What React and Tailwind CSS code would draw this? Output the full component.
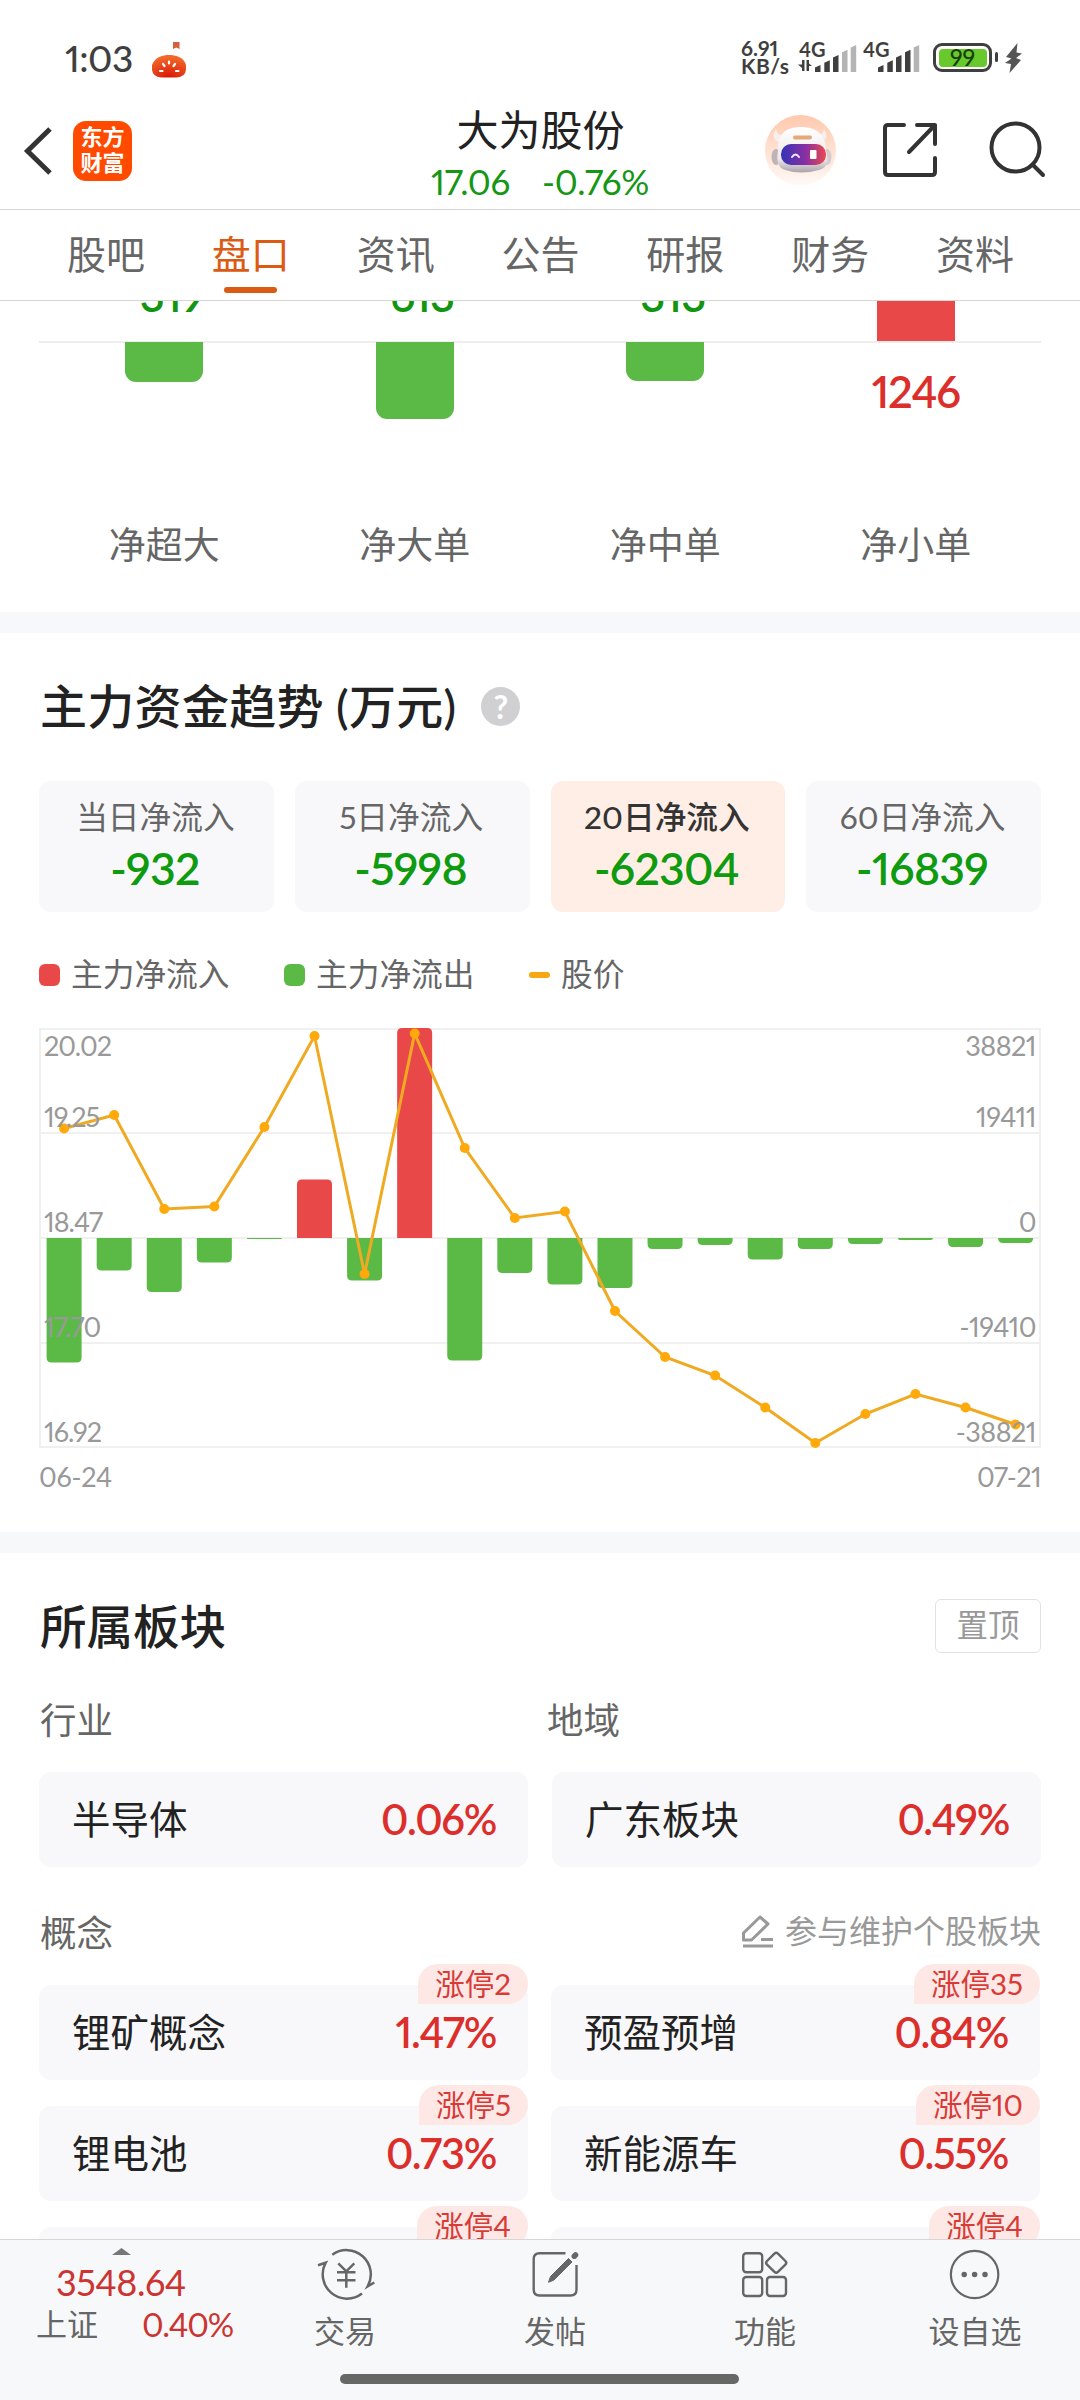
import React, { useState } from "react";

const tabs = ["股吧", "盘口", "资讯", "公告", "研报", "财务", "资料"]

const orders = [
  { name: "净超大", value: -319, height: 40 },
  { name: "净大单", value: -613, height: 77 },
  { name: "净中单", value: -313, height: 39 },
  { name: "净小单", value: 1246, height: 0 },
]

const periods = [
  { name: "当日净流入", value: "-932" },
  { name: "5日净流入", value: "-5998" },
  { name: "20日净流入", value: "-62304" },
  { name: "60日净流入", value: "-16839" },
]

// end of every bar, measured from the top of the chart (zero line is at 210)
const flows = [334.5, 242.5, 264, 234.5, 211, 151.5, 252.5, 0, 332.5, 245, 256.5, 260, 221, 217, 231.5, 221, 216, 212, 219, 215]
const prices = [100.5, 87, 181, 178.5, 99, 8, 246, 5.5, 120, 190, 183.5, 283, 329, 347.5, 379.5, 415, 386, 366, 379.5, 396.5]

const leftLabels = ["20.02", "19.25", "18.47", "17.70", "16.92"]
const rightLabels = ["38821", "19411", "0", "-19410", "-38821"]
const labelY = [27.5, 98.5, 203.5, 308.5, 413.5]

const concepts = [
  { name: "锂矿概念", rate: "1.47%", up: 2 },
  { name: "预盈预增", rate: "0.84%", up: 35 },
  { name: "锂电池", rate: "0.73%", up: 5 },
  { name: "新能源车", rate: "0.55%", up: 10 },
  { name: "", rate: "", up: 4 },
  { name: "", rate: "", up: 4 },
]

const Signal = ({ off, className }) => {
  const bars = [[0, 20], [9.3, 15.3], [18, 10], [27, 4.7], [35.7, 0]]

  return (
    <svg width="42" height="27" viewBox="0 0 42 27" className={className}>
      {
        bars.map(([x, y], i) => (
          <path
            key={x}
            d={`M${x} ${y + 2.5}L${x + 5.5} ${y}V27H${x}Z`}
            fill={i >= 5 - off ? "#b4b4b4" : "#3f3f3f"}
          />
        ))
      }
    </svg>
  )
}

const StatusBar = () => {
  return (
    <div className="h-[105px] flex items-start text-[#3f3f3f]">
      <div className="ml-[65px] mt-[38px] w-[87px] text-[37px] leading-10 font-medium tracking-[-0.5px]">1:03</div>
      <svg width="36" height="38" viewBox="0 0 36 38" className="mt-[40px]">
        <defs>
          <radialGradient id="fan" cx="0.5" cy="1" r="0.9">
            <stop offset="0" stopColor="#d81407" />
            <stop offset="1" stopColor="#f1682a" />
          </radialGradient>
        </defs>
        <path d="M21 2h6.500v7l-3.200-1.500-3.300 1.500z" fill="#d6603c" />
        <path d="M0 25C3 17 11 15 17 15S32 17 34 25V30Q33 37 25 37.500H9Q1 37 0 30Z" fill="url(#fan)" />
        <path d="M17 21.500v2M11 24l1.500 2M23 24l-1.500 2M8 31h2.500M24 31h2.500" stroke="#fff" strokeWidth="2.200" strokeLinecap="round" />
      </svg>
      <div className="ml-[553px] mt-[39px] w-[58px] text-[21px] leading-[18px] font-bold">
        <div>6.91</div>
        <div className="tracking-[0.5px]">KB/s</div>
      </div>
      <div className="relative w-[64px] h-[33px] mt-[40px] flex justify-end">
        <div className="absolute left-0 top-0 text-[20px] leading-[18px] font-bold">4G</div>
        <svg width="14" height="11" viewBox="0 0 14 11" className="absolute left-[-1px] top-[20px]">
          <path d="M4 0h2.500v11H4V8L0 4.500h4zM8.500 0H11v3.500L14 6h-3v5H8.500z" fill="#3f3f3f" />
        </svg>
        <Signal off={2} className="mr-[6px] mt-[4.500px]" />
      </div>
      <div className="relative w-[70px] h-[33px] mt-[40px] flex">
        <div className="absolute left-0 top-0 text-[20px] leading-[18px] font-bold">4G</div>
        <Signal off={1} className="ml-[15px] mt-[4.500px]" />
      </div>
      <div className="w-[59px] h-[29px] mt-[43px] border-[3px] border-[#3f3f3f] rounded-[9px] p-[2.500px]">
        <div className="h-full bg-[#68c92c] rounded-[4px] flex items-center justify-center text-[23px] leading-none font-medium text-[#173f0b]">99</div>
      </div>
      <div className="ml-[3px] mt-[52px] w-[3px] h-[10px] rounded-sm bg-[#3f3f3f]"></div>
      <svg width="18" height="30" viewBox="0 0 18 30" className="ml-[7px] mt-[43px]">
        <path d="M12.500 0L1 14l5.500 1.500L0 20l6 1-1.500 9L16 17l-5-2 6-4.500-5.500-1z" fill="#555" />
      </svg>
    </div>
  )
}

const Header = () => {
  return (
    <header className="h-[105px] border-b border-[#d6d6d6] grid grid-cols-3">
      <div className="flex items-start">
        <svg width="30" height="52" viewBox="0 0 30 52" className="ml-[23px] mt-[20px]" fill="none" stroke="#333" strokeWidth="5">
          <path d="M27 4L4.500 26L27 48" />
        </svg>
        <div className="ml-[20px] mt-[16px] w-[59px] h-[60px] rounded-[13px] bg-[#ff4a00] text-white font-bold text-[22px] leading-[26px] text-center pt-[3px]">
          东方<br />财富
        </div>
      </div>
      <div className="flex flex-col items-center">
        <h1 className="ml-px mt-[2px] h-[46px] leading-[46px] text-[42px] text-[#222]">大为股份</h1>
        <div className="mt-[8px] leading-10 flex gap-[32px] text-[35px] tracking-[-0.300px] text-[#159615]">
          <span>17.06</span>
          <span>-0.76%</span>
        </div>
      </div>
      <div className="flex items-start">
        <svg width="71" height="71" viewBox="0 0 71 71" className="ml-[45px] mt-[10px]">
          <defs>
            <linearGradient id="sky" x1="0" y1="0" x2="0" y2="1">
              <stop offset="0" stopColor="#ffc8ad" />
              <stop offset="1" stopColor="#fffaf7" />
            </linearGradient>
            <linearGradient id="visor">
              <stop offset="0" stopColor="#3433b4" />
              <stop offset="0.55" stopColor="#8a2fa4" />
              <stop offset="1" stopColor="#ea4a4d" />
            </linearGradient>
            <linearGradient id="head" x1="0" y1="0" x2="0" y2="1">
              <stop offset="0" stopColor="#fff" />
              <stop offset="0.7" stopColor="#efe8e8" />
              <stop offset="1" stopColor="#aaa3ac" />
            </linearGradient>
          </defs>
          <circle cx="35.500" cy="35.500" r="35.500" fill="url(#sky)" />
          <path d="M11 14q-5 7 0 12l7 2 2-7q-8 0-9-7zM59 14q5 7 0 12l-7 2-2-7q8 0 9-7z" fill="#f6efec" />
          <ellipse cx="11" cy="42" rx="4.500" ry="8" fill="#beb4b7" />
          <ellipse cx="62" cy="42" rx="4.500" ry="8" fill="#d6cbce" />
          <path d="M13 36C12 20 20 12 36 12S61 20 61 36Q66 52 54 55Q36 60 20 55Q10 52 13 36Z" fill="url(#head)" />
          <rect x="28" y="20.500" width="19" height="4" rx="2" fill="#e5a878" />
          <rect x="16" y="29" width="45" height="21" rx="10" fill="url(#visor)" />
          <path d="M27 42q3.500-5 7 0" fill="none" stroke="#f2eaff" strokeWidth="2" strokeLinecap="round" />
          <rect x="45" y="35" width="6.500" height="9" rx="1" fill="#fff" />
        </svg>
        <svg width="56" height="56" viewBox="0 0 56 56" className="ml-[46px] mt-[17px]" fill="none" stroke="#333" strokeWidth="4" strokeLinecap="round" strokeLinejoin="round">
          <path d="M22 3H6Q3 3 3 6V50Q3 53 6 53H50Q53 53 53 50V36M35 3H53V22M53 3L27 30" />
        </svg>
        <svg width="60" height="60" viewBox="0 0 60 60" className="ml-[49px] mt-[15px]" fill="none" stroke="#333" strokeWidth="4" strokeLinecap="round">
          <circle cx="28.500" cy="27.500" r="24" />
          <path d="M46 45L56 55" />
        </svg>
      </div>
    </header>
  )
}

const Orders = () => {
  return (
    <section className="h-[311px] px-[39px]">
      <div className="h-[42px] border-b-2 border-[#eee] grid grid-cols-4">
        {
          orders.map(el => (
            <div key={el.name} className="h-[40px] overflow-hidden flex flex-col justify-end items-center">
              {
                el.value < 0 ? (
                  <div className="mb-[24px] leading-[44px] shrink-0 text-[43.500px] font-semibold tracking-[-0.800px] text-[#129612]">{el.value}</div>
                ) : (
                  <div className="w-[78px] h-[40px] bg-[#e84848]"></div>
                )
              }
            </div>
          ))
        }
      </div>
      <div className="h-[172px] grid grid-cols-4 justify-items-center">
        {
          orders.map(el => (
            el.value < 0 ? (
              <div key={el.name} className="relative -mt-px w-[78px] rounded-b-[11px] bg-[#5bb946]" style={{ height: el.height }}></div>
            ) : (
              <div key={el.name} className="mt-[26px] leading-[44px] text-[43.500px] font-semibold tracking-[-1.200px] text-[#dc2f2c]">{el.value}</div>
            )
          ))
        }
      </div>
      <div className="grid grid-cols-4 text-center text-[37px] leading-[59px] text-[#666]">
        {
          orders.map(el => <div key={el.name}>{el.name}</div>)
        }
      </div>
    </section>
  )
}

const TrendChart = () => {
  const x = (i) => 64.1 + i * 50.08

  return (
    <svg width="1080" height="470" viewBox="0 0 1080 470" className="block">
      <g stroke="#f0f0f0" strokeWidth="2" fill="none">
        <path d="M40 1H1040V419H40ZM40 105H1040M40 210H1040M40 315H1040" />
      </g>
      {
        flows.map((end, i) => {
          const left = x(i) - 17.5
          const h = Math.abs(end - 210)
          const r = Math.min(5, h)

          return end < 210 ? (
            <path key={i} fill="#e84848" d={`M${left} 210v${r - h}q0 ${-r} ${r} ${-r}h${35 - 2 * r}q${r} 0 ${r} ${r}V210Z`} />
          ) : (
            <path key={i} fill="#5bb946" d={`M${left} 210v${h - r}q0 ${r} ${r} ${r}h${35 - 2 * r}q${r} 0 ${r} ${-r}V210Z`} />
          )
        })
      }
      <polyline points={prices.map((y, i) => `${x(i)},${y}`).join(" ")} fill="none" stroke="#f0aa22" strokeWidth="3" />
      {
        prices.map((y, i) => <circle key={i} cx={x(i)} cy={y} r="5" fill="#ffa90a" />)
      }
      <g fill="#999" fontSize="27">
        {
          leftLabels.map((el, i) => <text key={el} x="44" y={labelY[i]} className="tracking-[-1px]">{el}</text>)
        }
        {
          rightLabels.map((el, i) => <text key={el} x="1036" y={labelY[i]} textAnchor="end" className="tracking-[-0.500px]">{el}</text>)
        }
        <text x="39" y="458.500" className="tracking-[-0.300px]">06-24</text>
        <text x="1041" y="458.500" textAnchor="end" className="tracking-[-0.600px]">07-21</text>
      </g>
    </svg>
  )
}

const Trend = () => {
  const [active] = useState(2)

  return (
    <section className="h-[899px]">
      <div className="h-[148px] px-[40px] flex items-center">
        <h2 className="-mt-[2px] text-[47px] leading-none font-medium tracking-[0.300px] text-[#222]">主力资金趋势 (万元)</h2>
        <span className="ml-[25px] -mt-px w-[39px] h-[39px] rounded-full bg-[#d0d0d2] text-white text-[32px] leading-[39px] font-bold text-center">?</span>
      </div>
      <div className="px-[39px] grid grid-cols-4 gap-[21px]">
        {
          periods.map((el, i) => (
            <div key={el.name} className={`h-[131px] rounded-xl pt-[16px] text-center ${ i === active ? "bg-[#ffeee6]" : "bg-[#f8f8fa]" }`}>
              <div className={`-ml-[2px] text-[31.700px] leading-10 ${ i === active ? "font-medium text-[#333]" : "text-[#666]" }`}>{el.name}</div>
              <div className="mt-[7px] -ml-[3px] text-[44.500px] leading-[48px] font-semibold tracking-[-0.700px] text-[#0f9b0f]">{el.value}</div>
            </div>
          ))
        }
      </div>
      <div className="px-[39px] h-[116px] pt-[9px] flex items-center text-[31.700px] leading-none text-[#666]">
        <span className="w-[21px] h-[22px] rounded-md bg-[#e84848]"></span>
        <span className="ml-[11px] w-[213px]">主力净流入</span>
        <span className="w-[21px] h-[22px] rounded-md bg-[#5bb946]"></span>
        <span className="ml-[11px] w-[213px]">主力净流出</span>
        <span className="w-[21px] h-[6px] rounded-[3px] bg-[#f7a713]"></span>
        <span className="ml-[11px]">股价</span>
      </div>
      <TrendChart />
    </section>
  )
}

const PlateCard = ({ name, rate, up }) => {
  return (
    <div className="relative h-[95px] rounded-xl bg-[#f8f8fa] pl-[33px] pr-[32px] flex items-center justify-between leading-none">
      <span className="-mt-px text-[38.500px] text-[#222]">{name}</span>
      <span className="text-[41.500px] font-semibold text-[#dc2f2c] tracking-[-1.300px]">{rate}</span>
      {
        up && (
          <span className="absolute right-0 -top-[21px] h-[40px] px-[17px] rounded-[20px] rounded-bl-none bg-[#fde8e6] text-[29.500px] leading-[40px] text-[#d93a36]">涨停{up}</span>
        )
      }
    </div>
  )
}

const Plates = () => {
  return (
    <section className="px-[39px]">
      <div className="h-[147px] flex items-center justify-between">
        <h2 className="ml-px text-[46.500px] leading-none font-medium text-[#222]">所属板块</h2>
        <button className="w-[106px] h-[54px] -mt-px border border-[#e2e2e2] rounded-md text-[31.500px] leading-none text-[#999]">置顶</button>
      </div>
      <div className="grid grid-cols-2 gap-x-[24px] text-[36.500px] leading-[41px] text-[#666]">
        <div className="ml-px">行业</div>
        <div className="-ml-[5px]">地域</div>
      </div>
      <div className="mt-[31px] grid grid-cols-2 gap-x-[24px]">
        <PlateCard name="半导体" rate="0.06%" />
        <PlateCard name="广东板块" rate="0.49%" />
      </div>
      <div className="h-[118px] pt-[14px] flex items-center justify-between leading-none">
        <span className="ml-px text-[36.500px] text-[#666]">概念</span>
        <span className="flex items-center gap-[11px] text-[32px] text-[#999] -mt-[5px]">
          <svg width="34" height="34" viewBox="0 0 34 34" fill="none" stroke="#999" strokeWidth="3" strokeLinejoin="round">
            <path d="M3 32H33M21 25.500H33M3.500 19L20 3L28 10L11.500 26H3.500Z" />
          </svg>
          参与维护个股板块
        </span>
      </div>
      <div className="mr-px grid grid-cols-2 gap-x-[23px] gap-y-[26px]">
        {
          concepts.map((el, i) => <PlateCard key={i} {...el} />)
        }
      </div>
    </section>
  )
}

const icons = {
  trade: (
    <g strokeWidth="2.500">
      <path d="M17.300 10.700A24.300 24.300 0 0 1 52.700 42.300L59.300 38.500M47 49.500A24.300 24.300 0 0 1 10.700 18.700L3 21.300" />
      <path d="M23.300 19.300L31.300 27.300L39.300 19.300M22 28.300H40.500M22 36.300H40.500M31.300 27.500V43.700" />
    </g>
  ),
  post: (
    <g>
      <path d="M40.500 9.200H14.500Q8.700 9.200 8.700 15V45.500Q8.700 51.500 14.500 51.500H45.500Q51.500 51.500 51.500 45.500V21" strokeWidth="2.400" />
      <path d="M23.500 38.300L25.500 32.500L43.500 14.500L47 18L29 36Z" fill="#666" strokeWidth="1" />
      <path d="M49.300 12.200L50.500 11" strokeWidth="5.500" strokeLinecap="round" />
    </g>
  ),
  more: (
    <g strokeWidth="2.400">
      <rect x="8.200" y="9.300" width="19" height="19" rx="3" />
      <rect x="8.200" y="33" width="19" height="19" rx="3" />
      <rect x="32" y="33" width="19" height="19" rx="3" />
      <rect x="33.500" y="11" width="15.500" height="15.500" rx="2.500" transform="rotate(45 41.200 18.700)" />
    </g>
  ),
  watch: (
    <g>
      <circle cx="29.600" cy="30.500" r="23.700" strokeWidth="2.200" />
      <path d="M19.200 30.500h.01M29.600 30.500h.01M40 30.500h.01" strokeWidth="5.500" strokeLinecap="round" />
    </g>
  ),
}

const navs = [
  { name: "交易", icon: icons.trade },
  { name: "发帖", icon: icons.post },
  { name: "功能", icon: icons.more },
  { name: "设自选", icon: icons.watch },
]

const Footer = () => {
  return (
    <footer className="h-[161px] border-t border-[#d6d6d6] bg-[#f7f8fa]">
      <div className="h-[134px] flex">
        <div className="w-[240px]">
          <svg width="19" height="7" viewBox="0 0 19 7" className="ml-[112px] mt-[8px]">
            <path d="M0 7L9.500 0L19 7Z" fill="#777" />
          </svg>
          <div className="mt-[7px] ml-[56px] text-[36px] leading-10 tracking-[-0.500px] text-[#cc3431]">3548.64</div>
          <div className="ml-[36px] flex items-center whitespace-nowrap text-[31px] leading-[44px] text-[#666]">
            <span className="w-[106px]">上证</span>
            <span className="text-[33px] tracking-[-1.200px] text-[#cc3431]">0.40%</span>
          </div>
        </div>
        {
          navs.map(el => (
            <div key={el.name} className="flex-1 flex flex-col items-center pt-[4px]">
              <svg width="60" height="60" viewBox="0 0 60 60" fill="none" stroke="#666">{el.icon}</svg>
              <div className="mt-[7px] text-[31px] leading-10 text-[#666]">{el.name}</div>
            </div>
          ))
        }
      </div>
      <div className="ml-[340px] w-[399px] h-[10px] rounded-full bg-[#666866]"></div>
    </footer>
  )
}

const App = () => {
  const [tab, setTab] = useState("盘口")

  return (
    <div className="w-[1080px] h-[2400px] overflow-hidden bg-white font-['Lato','Noto_Sans_CJK_SC',sans-serif] proportional-nums">
      <StatusBar />
      <Header />
      <nav className="h-[91px] px-[33px] border-b border-[#d6d6d6] flex">
        {
          tabs.map(el => (
            <div key={el} onClick={() => setTab(el)} className={`flex-1 pl-px pt-[19px] flex flex-col items-center text-[39px] leading-[50px] ${ el === tab ? "text-[#dc5b14]" : "text-[#666]" }`}>
              {el}
              { el === tab && <div className="mt-[8px] w-[53px] h-[6px] rounded-full bg-[#dc5b14]"></div> }
            </div>
          ))
        }
      </nav>
      <main className="h-[1938px] overflow-hidden">
        <Orders />
        <div className="h-[21px] bg-[#f7f8fa]"></div>
        <Trend />
        <div className="h-[21px] bg-[#f7f8fa]"></div>
        <Plates />
      </main>
      <Footer />
    </div>
  )
}

export default App;
